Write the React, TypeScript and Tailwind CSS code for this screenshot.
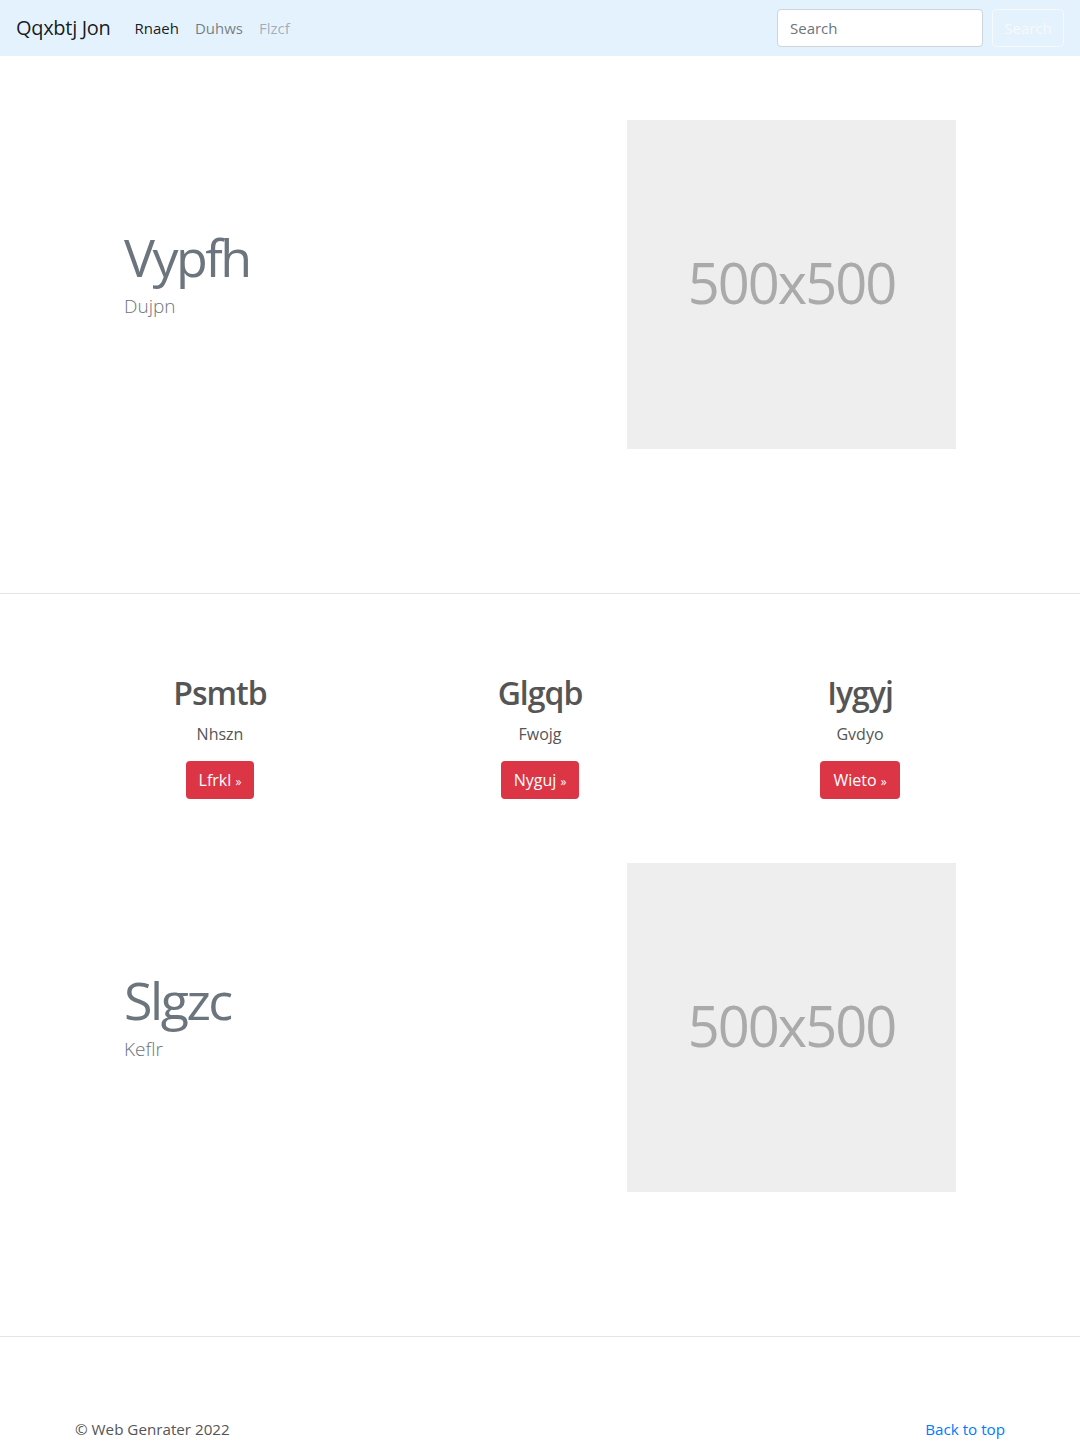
import React from "react";

function Featurette({ title, sub }: { title: string; sub: string }) {
  return (
    <section className="pt-16 pb-[144px]">
      <div className="mx-auto flex w-[862px] items-start">
        <div className="w-[503px] pl-[15px] pr-[15px] pt-[111px]">
          <h1 className="text-[52px] font-normal leading-[52px] tracking-[-2.5px] text-[#6c757d]">{title}</h1>
          <p className="mt-[11px] text-[19px] font-light leading-6 text-[#6c757d]">{sub}</p>
        </div>
        <div className="w-[359px] px-[15px]">
          <div className="flex h-[329px] w-[329px] items-center justify-center bg-[#eeeeee] pb-[5px] text-[56px] tracking-[-2px] text-[#aaaaaa]">
            500x500
          </div>
        </div>
      </div>
    </section>
  );
}

function Col({ title, sub, btn }: { title: string; sub: string; btn: string }) {
  return (
    <div className="flex w-[320px] flex-col items-center">
      <h2 className="text-[32px] font-semibold leading-[1.2] tracking-[-1px] text-[#555555]">{title}</h2>
      <p className="mt-[10px] text-[16px] leading-6 text-[#555555]">{sub}</p>
      <button className="mt-[15px] h-[38px] rounded-[4px] bg-[#dc3545] px-[13px] text-[16px] text-white">
        {btn} <span className="text-[12px]">»</span>
      </button>
    </div>
  );
}

export default function App() {
  return (
    <div className="min-h-[1441px] bg-white font-['Segoe_UI','Open_Sans',sans-serif]">
      <nav className="flex h-14 items-center bg-[#e3f2fd] px-4">
        <span className="mr-4 text-[20px] tracking-[-0.3px] text-black/90">Qqxbtj Jon</span>
        <ul className="flex text-[15px]">
          <li className="px-2 text-black/90">Rnaeh</li>
          <li className="px-2 text-black/50">Duhws</li>
          <li className="px-2 text-black/30">Flzcf</li>
        </ul>
        <div className="ml-auto flex items-center">
          <input
            placeholder="Search"
            className="mr-[9px] h-[38px] w-[206px] rounded-[4px] border border-[#ced4da] bg-white px-3 text-[15px] outline-none placeholder:text-[#6c757d]"
          />
          <button className="h-[38px] w-[72px] rounded-[4px] border border-[#f8f9fa] text-[15px] text-[#f8f9fa]">
            Search
          </button>
        </div>
      </nav>

      <Featurette title="Vypfh" sub="Dujpn" />
      <div className="h-px bg-[#e5e5e5]" />

      <section className="pt-[80px]">
        <div className="mx-auto flex w-[960px]">
          <Col title="Psmtb" sub="Nhszn" btn="Lfrkl" />
          <Col title="Glgqb" sub="Fwojg" btn="Nyguj" />
          <Col title="Iygyj" sub="Gvdyo" btn="Wieto" />
        </div>
      </section>

      <Featurette title="Slgzc" sub="Keflr" />
      <div className="h-px bg-[#e5e5e5]" />

      <footer className="mx-auto flex w-[930px] justify-between pt-[80px] pb-12 text-[15.2px] leading-6">
        <span className="text-[#555555]">© Web Genrater 2022</span>
        <span className="text-[#007bff]">Back to top</span>
      </footer>
    </div>
  );
}
